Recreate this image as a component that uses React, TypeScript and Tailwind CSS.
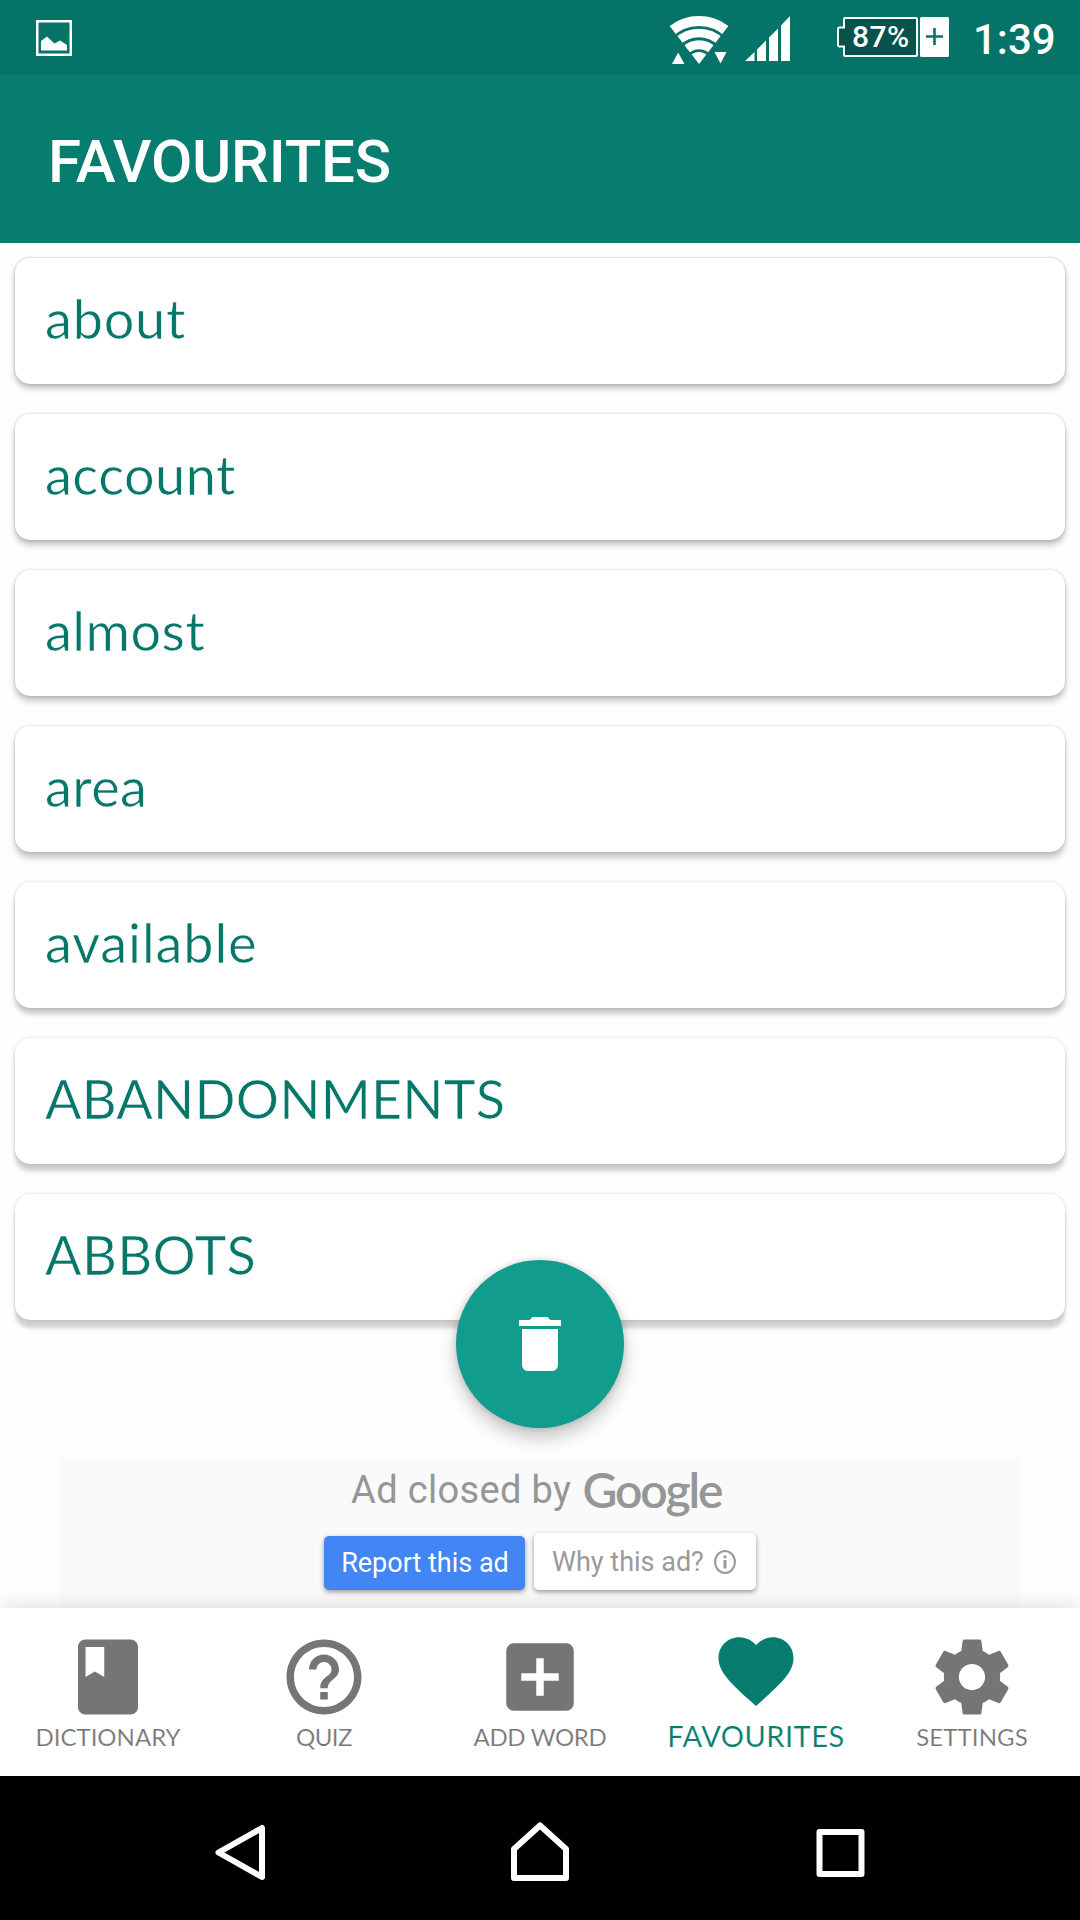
import { MdAddBox, MdClass, MdDelete, MdFavorite, MdHelpOutline } from 'react-icons/md';
import type { ComponentType } from 'react';

const words = [
  { text: 'about', look: 'tracking-[0.8px]', shadow: 'shadow-[0_4px_6px_rgba(0,0,0,0.26),0_0_3px_rgba(0,0,0,0.2)]' },
  { text: 'account', look: 'tracking-[0.5px]', shadow: 'shadow-[0_5px_6px_rgba(0,0,0,0.24),0_0_3px_rgba(0,0,0,0.2)]' },
  { text: 'almost', look: 'tracking-[0.5px]', shadow: 'shadow-[0_5px_6px_rgba(0,0,0,0.24),0_0_3px_rgba(0,0,0,0.19)]' },
  { text: 'area', look: 'tracking-[0.4px]', shadow: 'shadow-[0_6px_6px_rgba(0,0,0,0.22),0_0_3px_rgba(0,0,0,0.19)]' },
  { text: 'available', look: 'tracking-[0.9px]', shadow: 'shadow-[0_6px_5px_rgba(0,0,0,0.21),0_0_3px_rgba(0,0,0,0.18)]' },
  { text: 'ABANDONMENTS', look: 'tracking-[0.2px]', shadow: 'shadow-[0_7px_5px_rgba(0,0,0,0.2),0_0_3px_rgba(0,0,0,0.16)]' },
  { text: 'ABBOTS', look: 'tracking-[0.4px]', shadow: 'shadow-[0_8px_4px_rgba(0,0,0,0.18),0_0_3px_rgba(0,0,0,0.16)]' },
];

function GearIcon({ className }: { className?: string }) {
  return (
    <svg className={className} viewBox="0 0 24 24" fill="currentColor">
      <path d="M19.43 12.98c.04-.32.07-.64.07-.98s-.03-.66-.07-.98l2.11-1.65c.19-.15.24-.42.12-.64l-2-3.46c-.12-.22-.39-.3-.61-.22l-2.49 1c-.52-.4-1.08-.73-1.69-.98l-.38-2.65C14.46 2.18 14.25 2 14 2h-4c-.25 0-.46.18-.49.42l-.38 2.65c-.61.25-1.17.59-1.69.98l-2.49-1c-.23-.09-.49 0-.61.22l-2 3.46c-.13.22-.07.49.12.64l2.11 1.65c-.04.32-.07.65-.07.98s.03.66.07.98l-2.11 1.65c-.19.15-.24.42-.12.64l2 3.46c.12.22.39.3.61.22l2.49-1c.52.4 1.08.73 1.69.98l.38 2.65c.03.24.24.42.49.42h4c.25 0 .46-.18.49-.42l.38-2.65c.61-.25 1.17-.59 1.69-.98l2.49 1c.23.09.49 0 .61-.22l2-3.46c.12-.22.07-.49-.12-.64l-2.11-1.65zM12 15.5c-1.93 0-3.5-1.57-3.5-3.5s1.57-3.5 3.5-3.5 3.5 1.57 3.5 3.5-1.57 3.5-3.5 3.5z" />
    </svg>
  );
}

const tabs: { label: string; Icon: ComponentType<{ className?: string }>; look: string; active?: boolean }[] = [
  { label: 'DICTIONARY', Icon: MdClass, look: 'tracking-normal' },
  { label: 'QUIZ', Icon: MdHelpOutline, look: 'tracking-[-0.5px]' },
  { label: 'ADD WORD', Icon: MdAddBox, look: 'tracking-[-0.35px]' },
  { label: 'FAVOURITES', Icon: MdFavorite, look: 'tracking-[0.5px]', active: true },
  { label: 'SETTINGS', Icon: GearIcon, look: 'tracking-[0.1px]' },
];

function StatusBar() {
  return (
    <div className="flex h-[75px] shrink-0 items-start bg-[#067368] pl-9 text-white">
      <svg className="mt-5 size-9" viewBox="0 0 36 36">
        <rect x="1.25" y="1.25" width="33.5" height="33.5" fill="none" stroke="currentColor" strokeWidth="2.5" />
        <path d="M5 30.5V21L11 16.5 18.5 23.5 24 20.5 31 25V30.5Z" fill="currentColor" />
      </svg>
      <svg className="mt-4 ml-[597px] h-12 w-[60px]" viewBox="0 0 60 48">
        <defs>
          <clipPath id="fan">
            <path d="M1 10.5L30 48L59 10.5V0H1Z" />
          </clipPath>
        </defs>
        <g clipPath="url(#fan)" fill="none" stroke="currentColor">
          <circle cx="30" cy="48" r="43" strokeWidth="10" />
          <circle cx="30" cy="48" r="31" strokeWidth="8.5" />
          <circle cx="30" cy="48" r="19.3" strokeWidth="9" />
          <circle cx="30" cy="48" r="6" strokeWidth="12" />
        </g>
        <path d="M3 48L9.2 36.5L15.4 48ZM45.5 36H57.5L51.5 47.5Z" fill="currentColor" />
      </svg>
      <svg className="mt-4 ml-4 h-[45px] w-[46px]" viewBox="0 0 46 45" fill="currentColor">
        <path d="M0 45L9.5 36V45ZM12 33.5L21 24.5V45H12ZM24 21.5L33 12.5V45H24ZM36 9.5L45 0V45H36Z" />
      </svg>
      <div className="mt-[17px] ml-[46px] flex h-10 items-center">
        <div className="relative h-10 w-[81px]">
          <svg className="absolute inset-0 size-full" viewBox="0 0 81 40">
            <path d="M8 1H79a1 1 0 0 1 1 1V38a1 1 0 0 1-1 1H8a1 1 0 0 1-1-1V29.5H2.5a1.5 1.5 0 0 1-1.5-1.5V12a1.5 1.5 0 0 1 1.5-1.5H7V2a1 1 0 0 1 1-1Z" fill="#06534b" stroke="currentColor" strokeWidth="2" />
          </svg>
          <span className="relative block pl-[15px] text-[30px] leading-10 font-medium tracking-[0.4px]">87%</span>
        </div>
        <svg className="ml-[2px] h-10 w-[29px]" viewBox="0 0 29 40">
          <rect width="29" height="40" rx="1.5" fill="currentColor" />
          <path d="M6 19.5H23M14.5 11V28" stroke="#067368" strokeWidth="2.6" />
        </svg>
      </div>
      <span className="mt-[15px] ml-6 text-[42px] leading-[49px] font-medium">1:39</span>
    </div>
  );
}

function WordCard({ text, look, shadow }: { text: string; look: string; shadow: string }) {
  return (
    <li className={`h-[126px] rounded-[15px] bg-white pl-[30px] ${shadow}`}>
      <span className={`block pt-[29px] font-['Lato',sans-serif] text-[54px] leading-[64px] text-[#077769] [-webkit-text-stroke:0.6px_white] ${look}`}>{text}</span>
    </li>
  );
}

function AdNotice() {
  return (
    <div className="mx-[60px] flex h-[150px] shrink-0 flex-col bg-[#fafafa]">
      <div className="flex h-[75px] items-baseline pl-[291px] text-[#969696]">
        <span className="text-[38px] leading-[53px] tracking-[0.35px]">Ad closed by</span>
        <span className="relative top-[5px] ml-[11px] font-['Lato',sans-serif] text-[48px] leading-[53px] font-semibold tracking-[-2.1px]">Google</span>
      </div>
      <div className="flex items-end gap-[9px] pl-[264px]">
        <button className="h-[54px] w-[201px] rounded-[5px] bg-[#4285f4] pl-[1px] text-[27px] text-white shadow-[0_2px_5px_rgba(0,0,0,0.4)]">Report this ad</button>
        <button className="flex h-[57px] w-[222px] items-center rounded-[5px] bg-white pt-[1px] pl-[18px] text-[27px] text-[#9a9a9a] shadow-[0_2px_5px_rgba(0,0,0,0.4)]">
          Why this ad?
          <svg className="ml-[10px] h-6 w-[22px]" viewBox="0 0 22 24" fill="none" stroke="currentColor">
            <ellipse cx="11" cy="12" rx="9.9" ry="10.9" strokeWidth="2" />
            <path d="M11 10V18.5M11 5.5V8.3" strokeWidth="3" />
          </svg>
        </button>
      </div>
    </div>
  );
}

function TabBar() {
  return (
    <nav className="relative grid h-[168px] shrink-0 grid-cols-5 bg-white shadow-[0_0_20px_rgba(0,0,0,0.15)]">
      {tabs.map(({ label, Icon, look, active }) => (
        <div key={label} className={active ? 'flex flex-col items-center pt-[18px] text-[#077d6f]' : 'flex flex-col items-center pt-6 text-[#757575]'}>
          <Icon className="size-[90px]" />
          <span className={`font-['Lato',sans-serif] whitespace-nowrap [-webkit-text-stroke:0.2px_white] ${active ? 'mt-[2px] text-[29px] leading-[35px]' : 'text-[24px] leading-[30px]'} ${look}`}>{label}</span>
        </div>
      ))}
    </nav>
  );
}

function SystemNav() {
  return (
    <div className="flex h-36 shrink-0 items-center bg-black pt-2 pl-[215px] text-white">
      <svg className="h-[58px] w-[52px]" viewBox="0 0 52 58" fill="none" stroke="currentColor" strokeWidth="6" strokeLinejoin="round">
        <path d="M47 5V54L3.5 29.5Z" />
      </svg>
      <svg className="ml-[243px] h-[60px] w-[60px]" viewBox="0 0 60 60" fill="none" stroke="currentColor" strokeWidth="6" strokeLinejoin="round">
        <path d="M4 56V27L30 3.5L56 27V56Z" />
      </svg>
      <svg className="ml-[246px] size-[50px]" viewBox="0 0 50 50" fill="none" stroke="currentColor" strokeWidth="6" strokeLinejoin="round">
        <path d="M3.5 5H45.5V47H3.5Z" />
      </svg>
    </div>
  );
}

export default function App() {
  return (
    <div className="relative flex h-[1920px] w-[1080px] flex-col overflow-hidden bg-[#fefefe] font-['Roboto',sans-serif]">
      <StatusBar />
      <header className="flex h-[168px] shrink-0 items-center bg-[#077d6f] pt-[5px] pl-12 text-white">
        <h1 className="text-[60px] leading-none font-medium tracking-[-0.2px]">FAVOURITES</h1>
      </header>
      <ul className="flex grow flex-col gap-[30px] px-[15px] pt-[15px]">
        {words.map((word) => (
          <WordCard key={word.text} {...word} />
        ))}
      </ul>
      <AdNotice />
      <TabBar />
      <SystemNav />
      <button className="absolute top-[1260px] left-[456px] flex size-[168px] items-center justify-center rounded-full bg-[#119c8d] text-white shadow-[0_10px_18px_rgba(0,0,0,0.22),0_0_6px_rgba(0,0,0,0.15)]">
        <MdDelete className="size-[72px]" />
      </button>
    </div>
  );
}
